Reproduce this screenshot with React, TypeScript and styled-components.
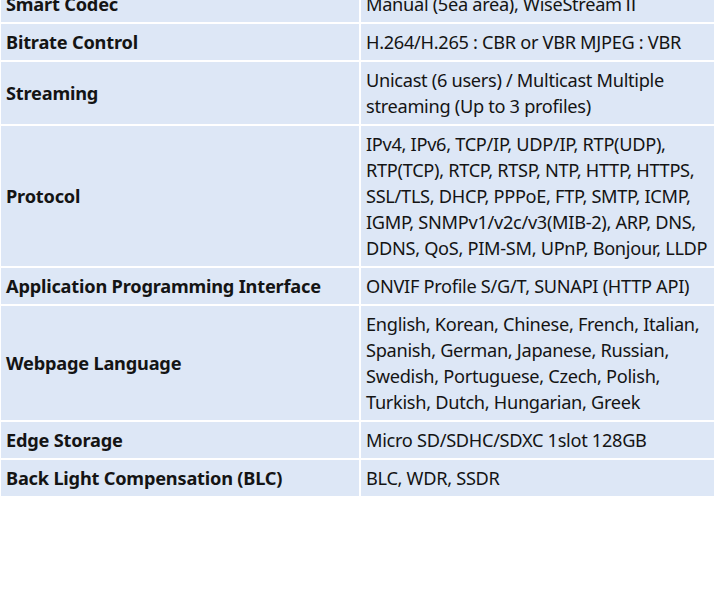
import styled, { createGlobalStyle } from "styled-components";

const Global = createGlobalStyle`
  body { margin: 0; background: #ffffff; }
`;

const rows: [string, string][] = [
  ["Smart Codec", "Manual (5ea area), WiseStreamⅡ"],
  ["Bitrate Control", "H.264/H.265 : CBR or VBR MJPEG : VBR"],
  ["Streaming", "Unicast (6 users) / Multicast Multiple streaming (Up to 3 profiles)"],
  [
    "Protocol",
    "IPv4, IPv6, TCP/IP, UDP/IP, RTP(UDP), RTP(TCP), RTCP, RTSP, NTP, HTTP, HTTPS, SSL/TLS, DHCP, PPPoE, FTP, SMTP, ICMP, IGMP, SNMPv1/v2c/v3(MIB-2), ARP, DNS, DDNS, QoS, PIM-SM, UPnP, Bonjour, LLDP",
  ],
  ["Application Programming Interface", "ONVIF Profile S/G/T, SUNAPI (HTTP API)"],
  [
    "Webpage Language",
    "English, Korean, Chinese, French, Italian, Spanish, German, Japanese, Russian, Swedish, Portuguese, Czech, Polish, Turkish, Dutch, Hungarian, Greek",
  ],
  ["Edge Storage", "Micro SD/SDHC/SDXC 1slot 128GB"],
  ["Back Light Compensation (BLC)", "BLC, WDR, SSDR"],
];

const Frame = styled.div`
  width: 715px;
  height: 595px;
  overflow: hidden;
`;

const Table = styled.table`
  width: 717px;
  table-layout: fixed;
  margin-top: -16px;
  margin-left: -1px;
  border-collapse: collapse;
  font-family: "Noto Sans", "Noto Sans CJK SC", sans-serif;
  font-size: 18.2px;
  line-height: 26px;
  color: #141414;
`;

const Cell = styled.td<{ $head?: boolean }>`
  background: #dde7f6;
  border: 2px solid #ffffff;
  padding: 5px 5px;
  vertical-align: middle;
  width: ${(p) => (p.$head ? "348px" : "auto")};
  font-weight: ${(p) => (p.$head ? 700 : 400)};
  letter-spacing: ${(p) => (p.$head ? "-0.2px" : "-0.3px")};
`;

export default function App() {
  return (
    <Frame>
      <Global />
      <Table>
        <tbody>
          {rows.map(([k, v]) => (
            <tr key={k}>
              <Cell $head>{k}</Cell>
              <Cell>{v}</Cell>
            </tr>
          ))}
        </tbody>
      </Table>
    </Frame>
  );
}
